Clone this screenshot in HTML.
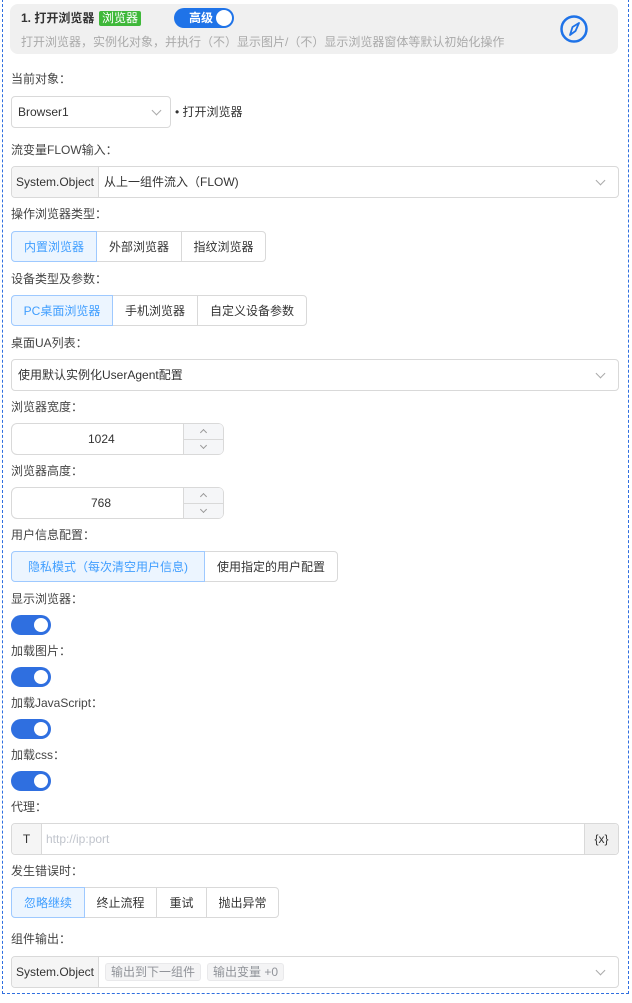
<!DOCTYPE html>
<html><head><meta charset="utf-8"><style>
*{box-sizing:border-box;margin:0;padding:0}
body{width:632px;height:1003px;background:#fff;font-family:"Liberation Sans","Noto Sans CJK SC",sans-serif;font-size:12px;color:#333;position:relative;overflow:hidden}
.frame{position:absolute;left:2px;top:-1px;width:627px;height:995px;border:1px dashed #2f6fe0}
.a{position:absolute}
.lbl{position:absolute;left:11px;color:#444;font-size:12px;line-height:14px}
.box{position:absolute;border:1px solid #d9d9d9;border-radius:4px;background:#fff}
.box>span.a{line-height:14px}
.pre{position:absolute;top:0;bottom:0;left:0;background:#f5f5f5;border-right:1px solid #d9d9d9;display:flex;align-items:center;justify-content:center;color:#333;border-radius:4px 0 0 4px}
.chev{position:absolute;width:7px;height:7px;border-right:1px solid #aaa;border-bottom:1px solid #aaa;transform:rotate(45deg)}
.bg{position:absolute;display:flex;height:31px}
.bg div{border:1px solid #d9d9d9;margin-left:-1px;display:flex;align-items:center;justify-content:center;color:#333;background:#fff}
.bg div:first-child{margin-left:0;border-radius:4px 0 0 4px;background:#ecf5ff;border-color:#9ec9ff;color:#409eff;position:relative;z-index:1}
.bg div:last-child{border-radius:0 4px 4px 0}
.tg{position:absolute;left:11px;width:40px;height:20px;border-radius:10px;background:#2f6fe0}
.tg:after{content:"";position:absolute;right:3px;top:3px;width:14px;height:14px;border-radius:50%;background:#fff}
.num .step{position:absolute;right:0;top:0;bottom:0;width:40px;background:#f5f6f8;border-left:1px solid #d9d9d9;border-radius:0 4px 4px 0}
.num .step:after{content:"";position:absolute;left:0;right:0;top:15px;border-top:1px solid #d9d9d9}
.up,.dn{position:absolute;left:17px;width:5px;height:5px;border-color:#999;border-style:solid;border-width:1px 0 0 1px}
.up{top:6px;transform:rotate(45deg)}
.dn{top:19px;transform:rotate(225deg)}
</style></head><body>
<div class="frame"></div>
<div class="a" style="left:10px;top:4px;width:608px;height:50px;background:#f0f0f0;border-radius:8px"></div>
<div class="a" style="left:21px;top:11px;font-weight:bold;font-size:12px;line-height:15px;color:#333">1. 打开浏览器</div>
<div class="a" style="left:99px;top:11px;width:42px;height:15px;background:#3fb83a;border-radius:2px;color:#fff;font-size:12px;line-height:15px;text-align:center">浏览器</div>
<div class="a" style="left:174px;top:8px;width:60px;height:20px;background:#1f73e8;border-radius:10px;color:#fff;font-weight:bold;font-size:12px;line-height:20px;padding-left:15px">高级</div>
<div class="a" style="left:216px;top:10px;width:16px;height:16px;border-radius:50%;background:#fff"></div>
<div class="a" style="left:21px;top:35px;color:#aaa;font-size:12px;line-height:15px">打开浏览器，实例化对象，并执行（不）显示图片/（不）显示浏览器窗体等默认初始化操作</div>
<svg class="a" style="left:559px;top:14px" width="30" height="30" viewBox="0 0 30 30"><circle cx="15" cy="15" r="12.5" fill="none" stroke="#1f73e8" stroke-width="2.5"/><path d="M20 9 L16.5 17 L11 21 L13.5 13 Z" fill="none" stroke="#1f73e8" stroke-width="1.8" stroke-linejoin="round"/></svg>

<div class="lbl" style="top:72px">当前对象：</div>
<div class="box" style="left:11px;top:96px;width:160px;height:32px"><span class="a" style="left:6px;top:8px">Browser1</span><span class="chev" style="right:10px;top:10px"></span></div>
<div class="a" style="left:175px;top:103px">• 打开浏览器</div>

<div class="lbl" style="top:143px">流变量FLOW输入：</div>
<div class="box" style="left:11px;top:166px;width:608px;height:32px"><div class="pre" style="width:87px">System.Object</div><span class="a" style="left:92px;top:8px">从上一组件流入（FLOW)</span><span class="chev" style="right:14px;top:10px"></span></div>

<div class="lbl" style="top:207px">操作浏览器类型：</div>
<div class="bg" style="left:11px;top:231px"><div style="width:86px">内置浏览器</div><div style="width:86px">外部浏览器</div><div style="width:85px">指纹浏览器</div></div>

<div class="lbl" style="top:272px">设备类型及参数：</div>
<div class="bg" style="left:11px;top:295px"><div style="width:102px">PC桌面浏览器</div><div style="width:86px">手机浏览器</div><div style="width:110px">自定义设备参数</div></div>

<div class="lbl" style="top:336px">桌面UA列表：</div>
<div class="box" style="left:11px;top:359px;width:608px;height:32px"><span class="a" style="left:6px;top:8px">使用默认实例化UserAgent配置</span><span class="chev" style="right:14px;top:10px"></span></div>

<div class="lbl" style="top:400px">浏览器宽度：</div>
<div class="box num" style="left:11px;top:423px;width:213px;height:32px;border-radius:6px"><span class="a" style="left:76px;top:8px">1024</span><div class="step"><i class="up"></i><i class="dn"></i></div></div>

<div class="lbl" style="top:464px">浏览器高度：</div>
<div class="box num" style="left:11px;top:487px;width:213px;height:32px;border-radius:6px"><span class="a" style="left:79px;top:8px">768</span><div class="step"><i class="up"></i><i class="dn"></i></div></div>

<div class="lbl" style="top:528px">用户信息配置：</div>
<div class="bg" style="left:11px;top:551px"><div style="width:194px">隐私模式（每次清空用户信息)</div><div style="width:134px">使用指定的用户配置</div></div>

<div class="lbl" style="top:592px">显示浏览器：</div>
<div class="tg" style="top:615px"></div>
<div class="lbl" style="top:644px">加载图片：</div>
<div class="tg" style="top:667px"></div>
<div class="lbl" style="top:696px">加载JavaScript：</div>
<div class="tg" style="top:719px"></div>
<div class="lbl" style="top:748px">加载css：</div>
<div class="tg" style="top:771px"></div>

<div class="lbl" style="top:800px">代理：</div>
<div class="box" style="left:11px;top:823px;width:608px;height:32px"><div class="pre" style="width:30px">T</div><span class="a" style="left:34px;top:8px;color:#c0c4cc">http://ip:port</span><div class="a" style="right:0;top:0;bottom:0;width:34px;background:#f0f0f0;border-left:1px solid #d9d9d9;border-radius:0 4px 4px 0;display:flex;align-items:center;justify-content:center">{x}</div></div>

<div class="lbl" style="top:864px">发生错误时：</div>
<div class="bg" style="left:11px;top:887px"><div style="width:74px">忽略继续</div><div style="width:73px">终止流程</div><div style="width:51px">重试</div><div style="width:73px">抛出异常</div></div>

<div class="lbl" style="top:932px">组件输出：</div>
<div class="box" style="left:11px;top:956px;width:608px;height:32px"><div class="pre" style="width:87px">System.Object</div>
<span class="a" style="left:93px;top:6px;height:18px;padding:0 5px;background:#f4f4f5;border:1px solid #e9e9eb;border-radius:3px;color:#909399;line-height:16px">输出到下一组件</span>
<span class="a" style="left:195px;top:6px;height:18px;padding:0 5px;background:#f4f4f5;border:1px solid #e9e9eb;border-radius:3px;color:#909399;line-height:16px">输出变量 +0</span>
<span class="chev" style="right:14px;top:10px"></span></div>
</body></html>
